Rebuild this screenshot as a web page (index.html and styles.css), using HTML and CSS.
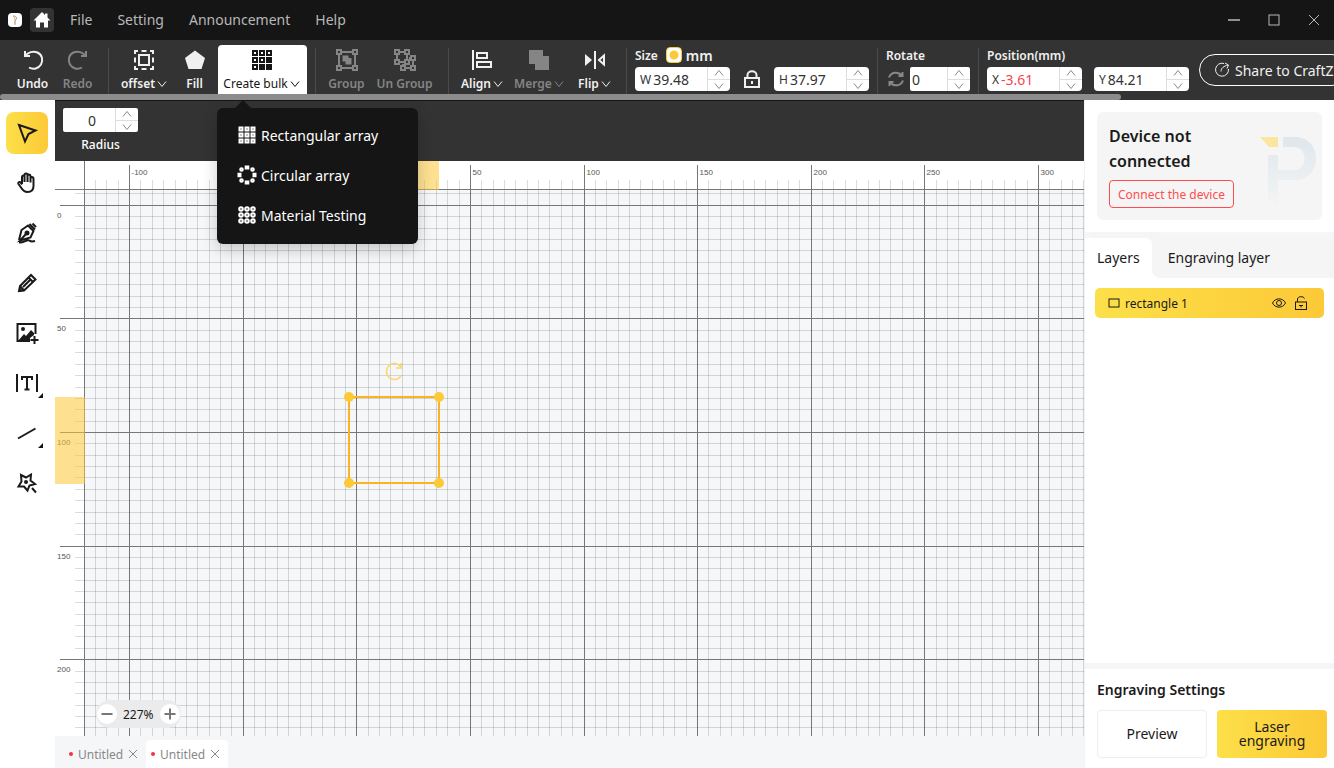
FILE: index.html
```html
<!DOCTYPE html>
<html lang="en">
    <head>
        <title>Laser Editor</title>
        <meta charset="UTF-8">
        <meta name="viewport" content="width=device-width, initial-scale=1.0">
        <link rel="stylesheet" href="styles.css">
    </head>
    <body>
        <svg class="defs">
            <symbol id="down" viewBox="0 0 10 10"><path d="M1 2.5L5 7.5L9 2.5"/></symbol>
            <symbol id="up" viewBox="0 0 10 10"><path d="M1 7.5L5 2.5L9 7.5"/></symbol>
            <symbol id="cross" viewBox="0 0 10 10"><path d="M1 1L9 9M9 1L1 9"/></symbol>
        </svg>
        <header class="titlebar">
            <svg class="logo" viewBox="0 0 14 14"><rect width="14" height="14" rx="4" fill="#fff"/><path d="M5 3h2l2 2-2 3v4" fill="none" stroke="#aaa"/><path d="M5 3l2 2v6" fill="none" stroke="#ccb26a"/></svg>
            <button class="home" title="Home"><svg viewBox="0 0 18 18"><path d="M9 1L0.500 9.500H3V16.500H7V11.500H11V16.500H15V9.500H17.500L14.500 6.500V2.500H12V4Z" fill="#fff"/></svg></button>
            <nav class="menu">
                <a href="#">File</a>
                <a href="#">Setting</a>
                <a href="#">Announcement</a>
                <a href="#">Help</a>
            </nav>
            <div class="window-buttons">
                <button title="Minimize"><svg viewBox="0 0 12 12"><path d="M0 6H12" stroke-width="1.5"/></svg></button>
                <button title="Maximize"><svg viewBox="0 0 12 12"><rect x="1" y="1" width="10" height="10"/></svg></button>
                <button title="Close"><svg viewBox="0 0 12 12"><path d="M1 1L11 11M11 1L1 11"/></svg></button>
            </div>
        </header>

        <div class="toolbar">
            <div class="tool-row">
                <button class="tool w45"><svg class="ico" viewBox="0 0 24 24"><path d="M4 3V8H9M4.500 7.500C7 4.500 12 2.500 16.500 4.500C21 6.500 22.500 12 20 16.500C17.500 20.500 12.500 22 8 19.500" /></svg><span>Undo</span></button>
                <button class="tool w45 off"><svg class="ico" viewBox="0 0 24 24"><path d="M20 3V8H15M19.500 7.500C17 4.500 12 2.500 7.500 4.500C3 6.500 1.500 12 4 16.500C6.500 20.500 11.500 22 16 19.500" /></svg><span>Redo</span></button>
                <i class="split"></i>
                <button class="tool w54"><svg class="ico" viewBox="0 0 24 24"><rect x="7" y="7" width="10" height="10"/><path d="M3 6V3H6M9.500 3H14.500M18 3H21V6M21 9.500V14.500M21 18V21H18M14.500 21H9.500M6 21H3V18M3 14.500V9.500"/></svg><span>offset<svg class="chev"><use href="#down"/></svg></span></button>
                <button class="tool w47"><svg class="ico" viewBox="0 0 24 24"><path class="solid" d="M12 2.500L22 10L18.500 21H5.500L2 10Z"/></svg><span>Fill</span></button>
                <div class="bulk">
                    <button class="tool active" id="bulk-button"><svg class="ico" viewBox="0 0 24 24"><path d="M3 3h4v4h-4zM10 3h4v4h-4zM17 3h4v4h-4zM3 10h4v4h-4zM10 10h4v4h-4zM3 17h4v4h-4z"/><path class="solid" d="M16 9h6v6h-6zM9 16h6v6h-6zM16 16h6v6h-6z"/></svg><span>Create bulk<svg class="chev"><use href="#down"/></svg></span></button>
                    <div class="dropdown" id="bulk-menu">
                        <button><svg viewBox="0 0 20 20"><path d="M2.500 2.500h3v3h-3zM8.500 2.500h3v3h-3zM14.500 2.500h3v3h-3zM2.500 8.500h3v3h-3zM8.500 8.500h3v3h-3zM14.500 8.500h3v3h-3zM2.500 14.500h3v3h-3zM8.500 14.500h3v3h-3zM14.500 14.500h3v3h-3z"/></svg>Rectangular array</button>
                        <button><svg viewBox="0 0 20 20"><path d="M8.700 1.500h2.600v2h-2.600zM8.700 16.500h2.600v2h-2.600zM1.500 8.700h2v2.600h-2zM16.500 8.700h2v2.600h-2z"/><circle cx="4.500" cy="4.500" r="1.300"/><circle cx="15.500" cy="4.500" r="1.300"/><circle cx="4.500" cy="15.500" r="1.300"/><circle cx="15.500" cy="15.500" r="1.300"/></svg>Circular array</button>
                        <button><svg viewBox="0 0 20 20"><circle cx="4" cy="4" r="1.800"/><circle cx="10" cy="4" r="1.800"/><circle cx="16" cy="4" r="1.800"/><circle cx="4" cy="10" r="1.800"/><circle cx="10" cy="10" r="1.800"/><circle cx="16" cy="10" r="1.800"/><circle cx="4" cy="16" r="1.800"/><circle cx="10" cy="16" r="1.800"/><circle cx="16" cy="16" r="1.800"/></svg>Material Testing</button>
                    </div>
                </div>
                <i class="split"></i>
                <button class="tool w45 off"><svg class="ico" viewBox="0 0 24 24"><path class="thin" d="M2 2h4v4h-4zM18 2h4v4h-4zM2 18h4v4h-4zM18 18h4v4h-4zM6 4H18M6 20H18M4 6V18M20 6V18"/><path class="solid" d="M7.500 7.500H13.500V10H16.500V16.500H10.500V13.500H7.500Z"/></svg><span>Group</span></button>
                <button class="tool w71 off"><svg class="ico" viewBox="0 0 24 24"><path class="thin" d="M2 2h4v4h-4zM12 2h4v4h-4zM2 12h4v4h-4zM18 8h4v4h-4zM8 18h4v4h-4zM18 18h4v4h-4zM12 12h4v4h-4zM6 4H12M4 6V12M14 6V12M6 14H12M16 10H18M10 16V18M12 20H18M20 12V18"/></svg><span>Un Group</span></button>
                <i class="split"></i>
                <button class="tool w50"><svg class="ico" viewBox="0 0 24 24"><path d="M3 2V22M7 5H17V10H7ZM7 14H21V19H7Z"/></svg><span>Align<svg class="chev"><use href="#down"/></svg></span></button>
                <button class="tool w64 off"><svg class="ico" viewBox="0 0 24 24"><path class="solid" d="M2 2H16V8H22V22H8V16H2Z"/></svg><span>Merge<svg class="chev"><use href="#down"/></svg></span></button>
                <button class="tool w47"><svg class="ico" viewBox="0 0 24 24"><path d="M12 3V21M21 7.500V16.500L16 12Z"/><path class="solid" d="M2 6V18L9 12Z"/></svg><span>Flip<svg class="chev"><use href="#down"/></svg></span></button>
                <i class="split"></i>
                <div class="field">
                    <div class="caption">Size <label class="unit"><input type="radio" name="unit" checked>mm</label></div>
                    <div class="boxes">
                        <div class="number"><label for="w">W</label><input type="text" id="w" value="39.48"><div class="steps"><button title="more"><svg><use href="#up"/></svg></button><button title="less"><svg><use href="#down"/></svg></button></div></div>
                        <button class="lock" title="Lock ratio"><svg viewBox="0 0 16 18"><rect x="1" y="8" width="14" height="9"/><path d="M3.500 8V5C3.500 0 12.500 0 12.500 5V8M8 11V14"/></svg></button>
                        <div class="number"><label for="h">H</label><input type="text" id="h" value="37.97"><div class="steps"><button title="more"><svg><use href="#up"/></svg></button><button title="less"><svg><use href="#down"/></svg></button></div></div>
                    </div>
                </div>
                <i class="split"></i>
                <div class="field">
                    <label class="caption" for="rotate">Rotate</label>
                    <div class="boxes">
                        <svg class="turn" viewBox="0 0 16 16"><path d="M1 6.500C3 1 10 0 14 4.500M14.500 1V5H10.500M15 9.500C13 15 6 16 2 11.500M1.500 15V11H5.500"/></svg>
                        <div class="number short"><input type="text" id="rotate" value="0"><div class="steps"><button title="more"><svg><use href="#up"/></svg></button><button title="less"><svg><use href="#down"/></svg></button></div></div>
                    </div>
                </div>
                <i class="split"></i>
                <div class="field">
                    <div class="caption">Position(mm)</div>
                    <div class="boxes wide-gap">
                        <div class="number negative"><label for="x">X</label><input type="text" id="x" value="-3.61"><div class="steps"><button title="more"><svg><use href="#up"/></svg></button><button title="less"><svg><use href="#down"/></svg></button></div></div>
                        <div class="number"><label for="y">Y</label><input type="text" id="y" value="84.21"><div class="steps"><button title="more"><svg><use href="#up"/></svg></button><button title="less"><svg><use href="#down"/></svg></button></div></div>
                    </div>
                </div>
                <button class="share"><svg viewBox="0 0 16 16"><path d="M10 1.500A6.500 6.500 0 1 0 14.500 7M7 9.500C7 6 10 4 14 3M11 1L14.500 3L13 6.500"/></svg>Share to CraftZ</button>
            </div>
            <div class="scroll"></div>
        </div>

        <main>
            <aside class="side">
                <button class="active" title="Select"><svg viewBox="0 0 24 24"><path d="M4 4L20.500 9.500L13.500 13L10 20.500Z"/></svg></button>
                <button title="Hand"><svg viewBox="0 0 24 24"><path d="M7 13V6C7 4 9.500 4 9.500 6V11V4C9.500 2 12.500 2 12.500 4V11V4.500C12.500 3 15.500 3 15.500 5V11.500V7C15.500 5.500 18.500 5.500 18.500 7.500V15C18.500 19 16 21 12.500 21C9 21 7.500 19 6 16.500L3.500 13C2.500 11 5 10.500 6 12L7 13.500"/></svg></button>
                <button title="Pen"><svg viewBox="0 0 24 24"><path d="M4 19L6.500 9L13 4.500L18.500 10L15.500 16.500L5 19.500L11.500 12.500M14.500 3L20 8.500M17.500 2.500L21 6M4 21.500C9 22 12 18 14.500 19.500C16 21 18 20.500 20 20"/><circle cx="12" cy="12" r="1.500" fill="currentColor"/></svg></button>
                <button title="Pencil"><svg viewBox="0 0 24 24"><path d="M4 20L5 15L16 4L20.500 8.500L9 19.500ZM13.500 6.500L18 11M15 9L8 16M5 15L9 19.500"/><path class="solid" d="M3.500 20.500L4.500 16.500L7.500 19.500Z"/></svg></button>
                <button title="Image"><svg viewBox="0 0 24 24"><path d="M20.500 13V3H2.500V20H15M19.500 15V23M15.500 19H23.500"/><circle cx="8" cy="8" r="2" fill="currentColor" stroke="none"/><path class="solid" d="M3 20L9 13L11 15L16 9L19 12V14L15 17V20Z"/></svg></button>
                <button class="more" title="Text"><svg viewBox="0 0 24 24"><path d="M2 3V21M22 3V21M7 9V6H17V9M12 6V18M9.500 18.500H14.500"/></svg></button>
                <button class="more" title="Line"><svg viewBox="0 0 24 24"><path d="M3 17.500L20.500 7.500"/></svg></button>
                <button title="Effects"><svg viewBox="0 0 24 24"><path d="M6 4L11 6.500L16 3.500L15.500 9.500L20 13L14.500 14.500L12.500 19.500L9 15.500L3.500 15.500L6.500 10.500ZM17 17L21 21.500"/><circle cx="11" cy="11" r="2" fill="currentColor" stroke="none"/></svg></button>
            </aside>

            <section class="work">
                <div class="options">
                    <div class="radius">
                        <div class="number"><input type="text" id="radius" value="0"><div class="steps"><button title="more"><svg><use href="#up"/></svg></button><button title="less"><svg><use href="#down"/></svg></button></div></div>
                        <label for="radius">Radius</label>
                    </div>
                </div>
                <div class="stage">
                    <svg class="canvas" id="canvas">
                        <g id="grid"></g>
                        <g class="band">
                            <rect x="294" y="0" width="90" height="29"/>
                            <rect x="0" y="236" width="30" height="87"/>
                        </g>
                        <g class="shape">
                            <rect x="294" y="236" width="90" height="86"/>
                            <circle cx="294" cy="236" r="5"/>
                            <circle cx="384" cy="236" r="5"/>
                            <circle cx="294" cy="322" r="5"/>
                            <circle cx="384" cy="322" r="5"/>
                            <path d="M346 206A8 8 0 1 0 346 215M346 202V207H341"/>
                        </g>
                    </svg>
                    <div class="zoom">
                        <button title="Zoom out"><svg viewBox="0 0 12 12"><path d="M0.500 6H11.500"/></svg></button>
                        <span>227%</span>
                        <button title="Zoom in"><svg viewBox="0 0 12 12"><path d="M0.500 6H11.500M6 0.500V11.500"/></svg></button>
                    </div>
                </div>
                <div class="files">
                    <div class="file"><a href="#">Untitled</a><button title="Close"><svg><use href="#cross"/></svg></button></div>
                    <div class="file current"><a href="#">Untitled</a><button title="Close"><svg><use href="#cross"/></svg></button></div>
                </div>
            </section>

            <aside class="panel">
                <div class="device">
                    <div>
                        <h2>Device not connected</h2>
                        <button>Connect the device</button>
                    </div>
                    <svg class="mark" viewBox="0 0 60 72">
                        <defs><linearGradient id="fade" x1="0" y1="0" x2="0" y2="1"><stop offset="0" stop-color="#dfe7ec"/><stop offset="1" stop-color="#f3f4f5"/></linearGradient></defs>
                        <path d="M2 0H20V10H11Z" fill="#fbe6a0"/>
                        <path d="M25 0H37C65 0 65 43 37 43H20V68L10 62V18H20V33H36C50 33 50 10 36 10H25Z" fill="url(#fade)"/>
                    </svg>
                </div>
                <div class="tabs">
                    <button class="current">Layers</button>
                    <button class="other">Engraving layer</button>
                </div>
                <div class="layer">
                    <svg class="box" viewBox="0 0 12 10"><rect x="1" y="1" width="10" height="8"/></svg>
                    <span>rectangle 1</span>
                    <button title="Visible"><svg viewBox="0 0 14 14"><path d="M0.500 7C3 1.500 11 1.500 13.500 7C11 12.500 3 12.500 0.500 7Z"/><circle cx="7" cy="7" r="2.500"/></svg></button>
                    <button title="Unlocked"><svg viewBox="0 0 14 14"><rect x="1.500" y="6" width="11" height="7.500"/><path d="M3.500 6V3C4 0 9.500 0 10.500 2.500M5 9.500H9M7 9.500V11.500"/></svg></button>
                </div>
                <div class="engrave">
                    <h3>Engraving Settings</h3>
                    <div class="actions">
                        <button>Preview</button>
                        <button class="primary">Laser engraving</button>
                    </div>
                </div>
            </aside>
        </main>
        <script src="script.js"></script>
    </body>
</html>
```
FILE: styles.css
```css
*{
    box-sizing: border-box;
}
body{
    margin: 0;
    min-height: 100vh;
    display: flex;
    flex-direction: column;
    overflow-x: hidden;
    font-family: "Noto Sans", "Open Sans", sans-serif;
    font-size: 14px;
    color: #1a1a1a;
}
button{
    font: inherit;
    color: inherit;
    border: none;
    background: none;
    padding: 0;
}
a{
    color: inherit;
    text-decoration: none;
}
svg{
    display: block;
    flex: none;
    fill: none;
    stroke: currentColor;
}
.defs{
    display: none;
}

/* title bar */
.titlebar{
    height: 40px;
    background: #151515;
    color: #b8b8b8;
    display: flex;
    align-items: center;
    padding-left: 8px;
}
.logo{
    width: 14px;
    height: 14px;
    stroke: none;
}
.home{
    width: 24px;
    height: 24px;
    margin-left: 8px;
    border-radius: 4px;
    background: #333;
    display: flex;
    align-items: center;
    justify-content: center;
}
.home svg{
    width: 18px;
    height: 18px;
    stroke: none;
}
.menu{
    display: flex;
    gap: 25px;
    margin-left: 16px;
    padding-bottom: 2px;
}
.window-buttons{
    margin-left: auto;
    display: flex;
}
.window-buttons button{
    width: 40px;
    height: 40px;
    display: flex;
    align-items: center;
    justify-content: center;
}
.window-buttons svg{
    width: 12px;
    height: 12px;
}

/* toolbar */
.toolbar{
    background: #333;
    color: #f0f0f0;
}
.tool-row{
    height: 54px;
    padding: 5px 0 0 10px;
    display: flex;
}
.tool-row > *{
    flex: none;
}
.tool{
    height: 49px;
    padding-top: 3px;
    display: flex;
    flex-direction: column;
    align-items: center;
    font-size: 12px;
    font-weight: 600;
    line-height: 20px;
}
.tool span{
    display: flex;
    align-items: center;
    white-space: nowrap;
    margin-top: 2px;
}
.w45{
    width: 45px;
}
.w47{
    width: 47px;
}
.w50{
    width: 50px;
}
.w54{
    width: 54px;
}
.w64{
    width: 64px;
}
.w71{
    width: 71px;
}
.off{
    color: #858585;
}
.ico{
    width: 24px;
    height: 24px;
    stroke-width: 2;
}
.solid{
    fill: currentColor;
    stroke: none;
}
.thin{
    stroke-width: 2;
}
.chev{
    width: 10px;
    height: 10px;
    margin-left: 2px;
}
.tool.active{
    width: 89px;
    padding-right: 2px;
    background: #fff;
    color: #151515;
    font-weight: 400;
    border-radius: 4px 4px 0 0;
}
.split{
    width: 1px;
    height: 46px;
    margin: 3px 8px 0;
    background: #4a4a4a;
}
.scroll{
    width: 84%;
    height: 6px;
    background: #8c8c8c;
    border-radius: 3px;
}
.bulk{
    position: relative;
}
.dropdown{
    position: absolute;
    z-index: 5;
    top: 63px;
    left: -1px;
    width: 201px;
    padding: 7px 0 9px;
    background: #151515;
    color: #fff;
    border-radius: 6px;
    box-shadow: 0 6px 16px rgba(0,0,0,0.2);
}
.dropdown::before{
    content: "";
    position: absolute;
    top: -8px;
    left: 18px;
    border: 8px solid transparent;
    border-top: 0;
    border-bottom-color: #151515;
}
.dropdown button{
    width: 100%;
    height: 40px;
    padding-left: 20px;
    display: flex;
    align-items: center;
    gap: 4px;
}
.dropdown svg{
    width: 20px;
    height: 20px;
    stroke-width: 2;
}

/* number fields */
.caption{
    display: flex;
    align-items: center;
    height: 20px;
    font-size: 12px;
    font-weight: 600;
    margin-bottom: 2px;
}
.unit{
    display: flex;
    align-items: center;
    gap: 4px;
    margin-left: 8px;
    font-size: 14px;
}
.unit input{
    appearance: none;
    width: 16px;
    height: 16px;
    margin: 0;
    border: 1px solid #fcc937;
    border-radius: 4px;
    background: radial-gradient(circle, #fcc937 4px, #fff 5px);
}
.boxes{
    display: flex;
    align-items: center;
}
.wide-gap{
    gap: 12px;
}
.number{
    width: 95px;
    height: 24px;
    display: flex;
    align-items: center;
    padding-left: 5px;
    background: #fff;
    color: #333;
    border-radius: 4px;
    overflow: hidden;
}
.number label{
    font-size: 12px;
    margin-right: 2px;
}
.number input{
    flex: 1;
    min-width: 0;
    height: 24px;
    padding: 0;
    border: none;
    outline: none;
    background: none;
    color: inherit;
    font: inherit;
}
.negative input{
    color: #f5454c;
}
.short{
    width: 60px;
    padding-left: 2px;
    border-radius: 2px;
}
.steps{
    width: 23px;
    border-left: 1px solid #ddd;
    color: #888;
}
.steps button{
    width: 22px;
    height: 12px;
    display: flex;
    align-items: center;
    justify-content: center;
}
.steps button + button{
    border-top: 1px solid #ddd;
}
.steps svg{
    width: 10px;
    height: 10px;
}
.lock{
    margin: 0 14px;
}
.lock svg{
    width: 16px;
    height: 18px;
    stroke-width: 2;
}
.turn{
    width: 16px;
    height: 16px;
    margin: 0 6px 0 2px;
    color: #888;
    stroke-width: 2;
}
.share{
    height: 32px;
    margin: 9px 0 0 10px;
    padding: 0 14px;
    border: 1px solid #fff;
    border-radius: 16px;
    display: flex;
    align-items: center;
    gap: 5px;
    white-space: nowrap;
}
.share svg{
    width: 16px;
    height: 16px;
}

main{
    flex: 1;
    display: flex;
}
/* left tools */
.side{
    width: 55px;
    padding: 12px 0 0 6px;
    display: flex;
    flex-direction: column;
    gap: 8px;
}
.side button{
    position: relative;
    width: 42px;
    height: 42px;
    border-radius: 8px;
    display: flex;
    align-items: center;
    justify-content: center;
}
.side svg{
    width: 24px;
    height: 24px;
    stroke-width: 2;
}
.side .active, .layer, .primary{
    background: linear-gradient(90deg, #fce049, #fcc937);
}
.more::after{
    content: "";
    position: absolute;
    right: 5px;
    bottom: 6px;
    border-left: 5px solid transparent;
    border-bottom: 5px solid #151515;
}

/* work area */
.work{
    flex: 1;
    min-width: 0;
    display: flex;
    flex-direction: column;
}
.options{
    height: 61px;
    padding: 7px 8px;
    background: #333;
    border-top: 1px solid #151515;
    color: #fff;
}
.radius{
    width: 75px;
    text-align: center;
    font-size: 12px;
}
.radius .number{
    width: 75px;
    padding: 0 0 0 6px;
    border-radius: 2px;
    font-size: 14px;
}
.radius input{
    text-align: center;
}
.radius > label{
    display: block;
    line-height: 26px;
    font-weight: 500;
}
.stage{
    flex: 1;
    display: flex;
    position: relative;
    background: #fff;
}
.canvas{
    flex: 1;
    min-width: 0;
    min-height: 0;
    stroke: none;
    shape-rendering: crispEdges;
}
.paper{
    fill: #f5f7f9;
}
.minor{
    stroke: #000;
    stroke-opacity: 0.14;
}
.major{
    stroke: #777;
}
.canvas text{
    font: 8px "Liberation Sans", Arial, sans-serif;
    fill: #555;
}
.band{
    fill: #fcc937;
    fill-opacity: 0.55;
}
.shape{
    shape-rendering: auto;
}
.shape rect{
    stroke: #fbb324;
    stroke-width: 2;
}
.shape circle{
    fill: #fcc937;
}
.shape path{
    stroke: #fcd56a;
    stroke-width: 1.5;
}
.zoom{
    position: absolute;
    left: 41px;
    bottom: 8px;
    height: 28px;
    padding: 0 1px;
    border-radius: 14px;
    background: #ebebeb;
    display: flex;
    align-items: center;
    gap: 6px;
    font-size: 12px;
}
.zoom button{
    width: 20px;
    height: 20px;
    border-radius: 10px;
    background: #fff;
    color: #777;
    display: flex;
    align-items: center;
    justify-content: center;
}
.zoom svg{
    width: 12px;
    height: 12px;
    stroke-width: 2;
}
.files{
    height: 32px;
    padding: 4px 9px 0;
    background: #f4f6f8;
    display: flex;
}
.file{
    width: 82px;
    display: flex;
    align-items: center;
    gap: 5px;
    padding-left: 5px;
    color: #888;
    font-size: 12px;
    border-radius: 4px 4px 0 0;
}
.file::before{
    content: "";
    width: 4px;
    height: 4px;
    border-radius: 2px;
    background: #f5333f;
}
.file svg{
    width: 10px;
    height: 10px;
}
.current{
    background: #fff;
}

/* right panel */
.panel{
    width: 250px;
    border-left: 1px solid #f0f2f4;
    display: flex;
    flex-direction: column;
}
.device{
    height: 108px;
    margin: 12px;
    padding: 12px 4px 12px 12px;
    background: #f5f5f5;
    border-radius: 6px;
    display: flex;
    justify-content: space-between;
}
.device h2{
    width: 120px;
    margin: 0 0 6px;
    font-size: 16px;
    font-weight: 600;
    line-height: 25px;
}
.device button{
    height: 28px;
    padding: 0 8px;
    border: 1px solid #ff4d4f;
    border-radius: 4px;
    color: #ff4d4f;
    font-size: 12px;
    white-space: nowrap;
}
.mark{
    width: 60px;
    height: 72px;
    margin: 13px 0 0 -30px;
    stroke: none;
}
.tabs{
    height: 46px;
    border-top: 6px solid #f4f6f8;
    display: flex;
}
.tabs button{
    height: 40px;
    padding-bottom: 2px;
}
.tabs .current{
    padding-left: 12px;
    padding-right: 12px;
    box-shadow: 6px -6px 0 #f5f5f5;
    border-radius: 0 6px 0 0;
}
.tabs .other{
    position: relative;
    flex: 1;
    padding-left: 16px;
    text-align: left;
    background: #f5f5f5;
    border-radius: 0 0 0 8px;
}
.layer{
    height: 30px;
    margin: 10px 10px 0;
    padding: 0 16px 0 13px;
    border-radius: 5px;
    display: flex;
    align-items: center;
    gap: 8px;
    font-size: 12px;
}
.layer span{
    flex: 1;
    margin-left: -3px;
}
.layer svg{
    width: 14px;
    height: 14px;
}
.layer .box{
    width: 12px;
    height: 10px;
}
.engrave{
    margin-top: auto;
    padding: 10px 7px 10px 12px;
    border-top: 6px solid #f4f6f8;
}
.engrave h3{
    margin: 0 0 10px;
    font-size: 14px;
    font-weight: 600;
    line-height: 21px;
}
.actions{
    display: flex;
    gap: 10px;
}
.actions button{
    flex: 1;
    height: 48px;
    padding: 0 16px;
    border: 1px solid #eee;
    border-radius: 4px;
    line-height: 14px;
}
.actions .primary{
    border-color: transparent;
    background-origin: border-box;
}
```
FILE: script.js
```js
var canvas = document.getElementById("canvas");
var grid = document.getElementById("grid");
var ruler = 29;      // ruler thickness
var step = 11.36;    // 5 mm at 227%
var zeroX = 301.8;
var zeroY = 44.3;

function add(name, attrs, text){
    var el = document.createElementNS("http://www.w3.org/2000/svg", name);
    for(var key in attrs){
        el.setAttribute(key, attrs[key]);
    }
    if(text !== undefined){
        el.textContent = text;
    }
    grid.appendChild(el);
}
function snap(v){
    return Math.floor(v) + 0.5;
}
function drawGrid(){
    var w = canvas.getBoundingClientRect().width;
    var h = canvas.getBoundingClientRect().height;
    var i, p, big;
    grid.textContent = "";
    add("rect", {"class": "paper", x: ruler, y: ruler, width: w, height: h});
    for(i = Math.ceil((ruler - zeroX) / step); zeroX + i * step < w; i++){
        p = snap(zeroX + i * step);
        big = i % 10 === 0;
        add("line", {"class": big ? "major" : "minor", x1: p, x2: p, y1: big ? 4 : 19, y2: h});
        if(big){
            add("text", {x: p + 2, y: 14}, i * 5);
        }
    }
    for(i = Math.ceil((ruler - zeroY) / step); zeroY + i * step < h; i++){
        p = snap(zeroY + i * step);
        big = i % 10 === 0;
        add("line", {"class": big ? "major" : "minor", y1: p, y2: p, x1: big ? 5 : 20, x2: w});
        if(big){
            add("text", {x: 2, y: p + 12}, i * 5);
        }
    }
    add("line", {"class": "major", x1: 0, x2: w, y1: 28.5, y2: 28.5});
    add("line", {"class": "major", x1: 29.5, x2: 29.5, y1: 0, y2: h});
}
drawGrid();
window.onresize = drawGrid;

document.getElementById("bulk-button").onclick = function(){
    var menu = document.getElementById("bulk-menu");
    menu.hidden = !menu.hidden;
    menu.style.display = menu.hidden ? "none" : "";
};
```
